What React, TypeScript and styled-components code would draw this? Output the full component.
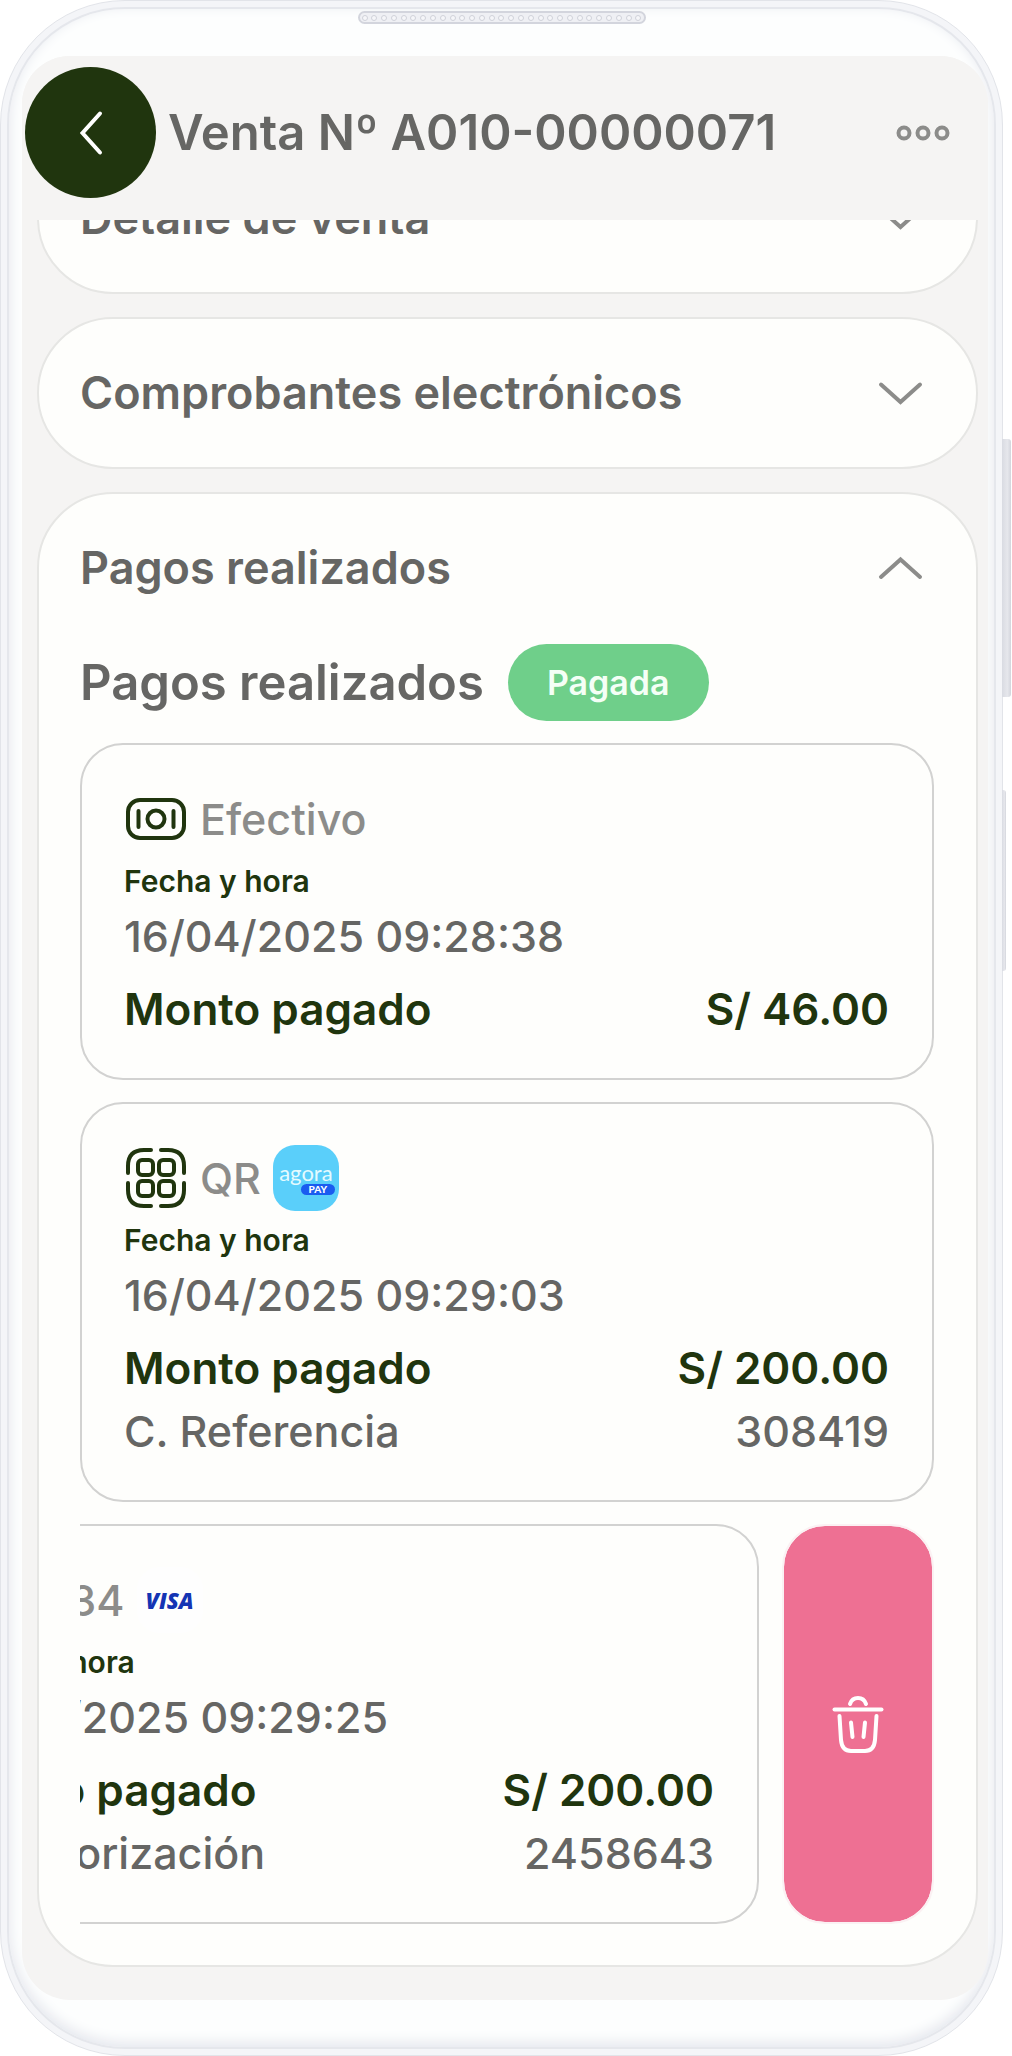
import React, { useState } from "react";
import styled, { createGlobalStyle } from "styled-components";

const color = {
  screen: "#f5f4f3",
  card: "#fefefc",
  cardLine: "#e6e6e4",
  boxLine: "#d2d2d1",
  ink: "#20350e",
  text: "#666664",
  muted: "#8c8c8a",
  paid: "#6fcf8a",
  danger: "#ee7093",
};

const GlobalStyle = createGlobalStyle`
  *, *::before, *::after { box-sizing: border-box; }
  body {
    margin: 0;
    background: #fff;
    font-family: Inter, "Liberation Sans", sans-serif;
    color: ${color.text};
  }
  button {
    font: inherit;
    color: inherit;
    background: none;
    border: 0;
    padding: 0;
    cursor: pointer;
  }
  h1, h2, h3, p, dl, dt, dd { margin: 0; font: inherit; }
`;

/* ---------- phone ---------- */

const Stage = styled.div`
  padding-right: 9px;
`;

const Phone = styled.div`
  position: relative;
  padding: 6px;
  border: 1px solid #e2e4e9;
  border-radius: 125px;
  background: #f4f5f8;
`;

const SideKey = styled.span<{ $top: number; $height: number; $depth: number }>`
  position: absolute;
  left: 100%;
  top: ${(p) => p.$top}px;
  width: ${(p) => p.$depth}px;
  height: ${(p) => p.$height}px;
  border-radius: 0 3px 3px 0;
  background: linear-gradient(90deg, #d9dbe2, #e6e7ec 60%, #d3d5dc);
`;

const Bezel = styled.div`
  padding: 2px 0 47px;
  border: 2px solid #e5e7ec;
  border-radius: 118px;
  background: #fdfefe;
  box-shadow: inset 0 -4px 14px #e3e5ec;
`;

const Speaker = styled.div`
  display: flex;
  justify-content: space-between;
  align-items: center;
  width: 288px;
  height: 13px;
  margin: 0 auto 32px;
  padding: 0 2px;
  border: 2px solid #d3d5dd;
  border-radius: 7px;
  background: #eff0f4;
`;

const SpeakerHole = styled.i`
  width: 6px;
  height: 6px;
  border: 1px solid #d0d2da;
  border-radius: 50%;
  background: #f6f6f9;
`;

const Screen = styled.main`
  margin: 0 6px 0 13px;
  border-radius: 48px;
  background: ${color.screen};
  overflow: hidden;
`;

/* ---------- header ---------- */

const Header = styled.header`
  position: relative;
  display: flex;
  align-items: center;
  gap: 12px;
  padding: 11px 36px 22px 3px;
  background: ${color.screen};
`;

const BackButton = styled.button`
  display: grid;
  place-items: center;
  width: 131px;
  height: 131px;
  border-radius: 50%;
  background: ${color.ink};
  color: #fff;
`;

const Title = styled.h1`
  flex: 1;
  font-size: 49px;
  line-height: 64px;
  font-weight: 600;
  white-space: nowrap;
`;

const MoreButton = styled.button`
  display: flex;
  color: ${color.muted};
`;

/* ---------- accordion ---------- */

const Viewport = styled.div`
  overflow: hidden;
`;

const Panels = styled.div`
  display: flex;
  flex-direction: column;
  gap: 23px;
  margin-top: -78px;
  padding: 0 10px 33px 15px;
`;

const Panel = styled.section`
  border: 2px solid ${color.cardLine};
  border-radius: 76px;
  padding: 0 42px 0 41px;
  background: ${color.card};
`;

const PanelToggle = styled.button`
  display: flex;
  align-items: center;
  justify-content: space-between;
  width: 100%;
  height: 148px;
  font-size: 45px;
  line-height: 62px;
  font-weight: 600;
  text-align: left;
`;

const PanelBody = styled.div`
  display: flex;
  flex-direction: column;
  gap: 22px;
  padding: 2px 0 41px;
`;

const BodyHead = styled.div`
  display: flex;
  align-items: center;
  gap: 24px;
`;

const BodyTitle = styled.h2`
  font-size: 49px;
  line-height: 64px;
  font-weight: 600;
`;

const StatusBadge = styled.span`
  padding: 0 39px;
  border-radius: 39px;
  background: ${color.paid};
  color: #f4fff6;
  font-size: 34px;
  line-height: 77px;
  font-weight: 600;
`;

/* ---------- payments ---------- */

const PaymentBox = styled.article`
  border: 2px solid ${color.boxLine};
  border-radius: 43px;
  padding: 41px 43px 37px 42px;
  background: ${color.card};
`;

const Method = styled.h3`
  display: flex;
  align-items: center;
  gap: 12px;
  height: 66px;
  color: ${color.muted};
  font-size: 43px;
  line-height: 62px;
  font-weight: 500;
`;

const MethodIcon = styled.svg`
  flex: none;
  width: 64px;
  height: 64px;
  fill: none;
  stroke: ${color.ink};
  stroke-width: 4;
  stroke-linecap: round;
`;

const FieldLabel = styled.p`
  margin-top: 5px;
  color: ${color.ink};
  font-size: 30px;
  line-height: 48px;
  font-weight: 600;
`;

const FieldValue = styled.p`
  font-size: 43px;
  line-height: 62px;
  font-weight: 500;
`;

const Amounts = styled.dl`
  margin-top: 11px;
`;

const AmountRow = styled.div<{ $strong?: boolean }>`
  display: flex;
  justify-content: space-between;
  font-size: ${(p) => (p.$strong ? 44 : 43)}px;
  line-height: 63px;
  color: ${(p) => (p.$strong ? color.ink : color.text)};
  font-weight: ${(p) => (p.$strong ? 600 : 500)};
`;

const SwipeRow = styled.div`
  display: flex;
  justify-content: flex-end;
  gap: 23px;
  overflow: hidden;

  > article { flex: 0 0 100%; }
`;

const DeleteButton = styled.button`
  display: grid;
  place-items: center;
  flex: 0 0 152px;
  border: 2px solid #fbf1f3;
  border-radius: 43px;
  background: ${color.danger};
  background-clip: padding-box;
  color: #fff;
`;

/* ---------- brands ---------- */

const BrandTile = styled.span<{ $bg: string }>`
  display: flex;
  flex-direction: column;
  justify-content: center;
  align-items: center;
  flex: none;
  width: 66px;
  height: 66px;
  border-radius: 22px;
  background: ${(p) => p.$bg};
`;

const AgoraName = styled.span`
  color: #e4fbff;
  font: 400 22px/22px Lato, sans-serif;
`;

const AgoraPay = styled.span`
  align-self: flex-end;
  width: 34px;
  margin-right: 4px;
  border-radius: 6px;
  background: #1a5cf0;
  color: #fff;
  font: 900 10px/11px Lato, sans-serif;
  text-align: center;
`;

const VisaName = styled.span`
  color: #1434b4;
  font: italic 800 22px/24px "Open Sans", sans-serif;
`;

function Agora() {
  return (
    <BrandTile $bg="#5acffa">
      <AgoraName>agora</AgoraName>
      <AgoraPay>PAY</AgoraPay>
    </BrandTile>
  );
}

function Visa() {
  return (
    <BrandTile $bg="#fefefe">
      <VisaName>VISA</VisaName>
    </BrandTile>
  );
}

/* ---------- icons ---------- */

function Chevron({ up }: { up?: boolean }) {
  return (
    <svg width="66" height="66" viewBox="0 0 66 66" fill="none" stroke={color.muted} strokeWidth="4" strokeLinecap="round" aria-hidden="true">
      <path d={up ? "M13 42 32.500 24.500 52 42" : "M13 24.500 32.500 42 52 24.500"} />
    </svg>
  );
}

function CashIcon() {
  return (
    <MethodIcon viewBox="0 0 64 64" aria-hidden="true">
      <rect x="4" y="13" width="56" height="38" rx="12" />
      <circle cx="32" cy="32" r="8.500" />
      <path d="M14.500 24v16M49.500 24v16" />
    </MethodIcon>
  );
}

function QrIcon() {
  return (
    <MethodIcon viewBox="0 0 64 64" aria-hidden="true">
      <path d="M4 27V20Q4 4 20 4H27M37 4H44Q60 4 60 20V27M60 37V44Q60 60 44 60H37M27 60H20Q4 60 4 44V37" />
      <rect x="14" y="14" width="15" height="15" rx="4" />
      <rect x="35" y="14" width="15" height="15" rx="4" />
      <rect x="14" y="35" width="15" height="15" rx="4" />
      <rect x="35" y="35" width="15" height="15" rx="4" />
    </MethodIcon>
  );
}

function CardIcon() {
  return (
    <MethodIcon viewBox="0 0 64 64" aria-hidden="true">
      <rect x="4" y="11" width="56" height="42" rx="10" />
      <path d="M4 25h56M14 41h12" />
    </MethodIcon>
  );
}

function TrashIcon() {
  return (
    <svg width="64" height="64" viewBox="0 0 64 64" fill="none" stroke="currentColor" strokeWidth="4" strokeLinecap="round" aria-hidden="true">
      <path d="M24 12Q26 6 32 6T40 12" />
      <path d="M8.500 17.500H55.500" />
      <path d="M13.500 24 15 48Q16 59 25 59H39Q48 59 49 48L50.500 24" />
      <path d="M25 30.500 26.500 45M39 30.500 37.500 45" />
    </svg>
  );
}

/* ---------- data ---------- */

type Payment = {
  icon: React.ReactNode;
  method: string;
  brand?: React.ReactNode;
  date: string;
  amount: string;
  codeLabel?: string;
  code?: string;
  swiped?: boolean;
};

const payments: Payment[] = [
  { icon: <CashIcon />, method: "Efectivo", date: "16/04/2025 09:28:38", amount: "S/ 46.00" },
  {
    icon: <QrIcon />,
    method: "QR",
    brand: <Agora />,
    date: "16/04/2025 09:29:03",
    amount: "S/ 200.00",
    codeLabel: "C. Referencia",
    code: "308419",
  },
  {
    icon: <CardIcon />,
    method: "1234",
    brand: <Visa />,
    date: "16/04/2025 09:29:25",
    amount: "S/ 200.00",
    codeLabel: "C. Autorización",
    code: "2458643",
    swiped: true,
  },
];

function PaymentCard({ payment }: { payment: Payment }) {
  return (
    <PaymentBox>
      <Method>
        {payment.icon}
        <span>{payment.method}</span>
        {payment.brand}
      </Method>
      <FieldLabel>Fecha y hora</FieldLabel>
      <FieldValue>{payment.date}</FieldValue>
      <Amounts>
        <AmountRow $strong>
          <dt>Monto pagado</dt>
          <dd>{payment.amount}</dd>
        </AmountRow>
        {payment.code && (
          <AmountRow>
            <dt>{payment.codeLabel}</dt>
            <dd>{payment.code}</dd>
          </AmountRow>
        )}
      </Amounts>
    </PaymentBox>
  );
}

function AccordionPanel({ title, initiallyOpen = false, children }: { title: string; initiallyOpen?: boolean; children?: React.ReactNode }) {
  const [open, setOpen] = useState(initiallyOpen);
  return (
    <Panel>
      <PanelToggle type="button" aria-expanded={open} onClick={() => setOpen(!open)}>
        {title}
        <Chevron up={open} />
      </PanelToggle>
      {open && children && <PanelBody>{children}</PanelBody>}
    </Panel>
  );
}

export default function App() {
  return (
    <>
      <GlobalStyle />
      <Stage>
        <Phone>
          <SideKey $top={438} $height={258} $depth={9} />
          <SideKey $top={789} $height={181} $depth={4} />
          <Bezel>
            <Speaker>
              {Array.from({ length: 29 }, (_, i) => (
                <SpeakerHole key={i} />
              ))}
            </Speaker>
            <Screen>
              <Header>
                <BackButton type="button" aria-label="Volver">
                  <svg width="64" height="64" viewBox="0 0 64 64" fill="none" stroke="currentColor" strokeWidth="4" strokeLinecap="round" aria-hidden="true">
                    <path d="M41 12.500 23.500 32 41 51.500" />
                  </svg>
                </BackButton>
                <Title>Venta Nº A010-00000071</Title>
                <MoreButton type="button" aria-label="Más opciones">
                  <svg width="58" height="24" viewBox="0 0 58 24" fill="none" stroke="currentColor" strokeWidth="4" aria-hidden="true">
                    <circle cx="10" cy="12" r="5.500" />
                    <circle cx="29" cy="12" r="5.500" />
                    <circle cx="48" cy="12" r="5.500" />
                  </svg>
                </MoreButton>
              </Header>
              <Viewport>
                <Panels>
                  <AccordionPanel title="Detalle de venta" />
                  <AccordionPanel title="Comprobantes electrónicos" />
                  <AccordionPanel title="Pagos realizados" initiallyOpen>
                    <BodyHead>
                      <BodyTitle>Pagos realizados</BodyTitle>
                      <StatusBadge>Pagada</StatusBadge>
                    </BodyHead>
                    {payments.map((payment) =>
                      payment.swiped ? (
                        <SwipeRow key={payment.date}>
                          <PaymentCard payment={payment} />
                          <DeleteButton type="button" aria-label="Eliminar pago">
                            <TrashIcon />
                          </DeleteButton>
                        </SwipeRow>
                      ) : (
                        <PaymentCard key={payment.date} payment={payment} />
                      ),
                    )}
                  </AccordionPanel>
                </Panels>
              </Viewport>
            </Screen>
          </Bezel>
        </Phone>
      </Stage>
    </>
  );
}
